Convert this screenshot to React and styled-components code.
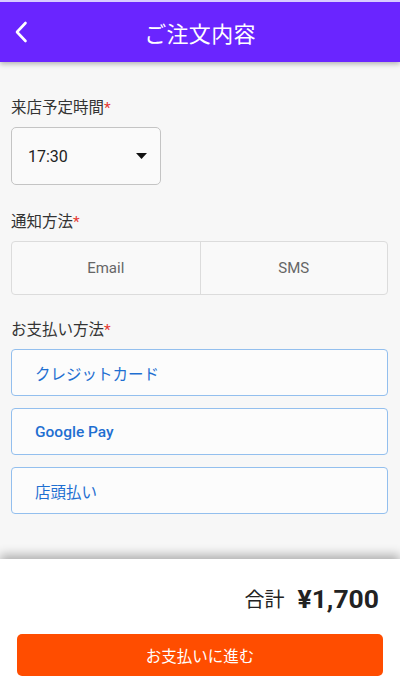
import React from "react";
import styled, { createGlobalStyle } from "styled-components";

const Global = createGlobalStyle`
  html, body { margin: 0; padding: 0; height: 100%; }
  body { background: #f7f7f7; font-family: Roboto, "Noto Sans CJK JP", sans-serif; }
  #root { height: 100%; }
`;

const Page = styled.div`
  height: 686px;
  display: flex;
  flex-direction: column;
  overflow: hidden;
  background: #f7f7f7;
  border-top: 2px solid #d9ccff;
  box-sizing: border-box;
`;

const Header = styled.header`
  position: relative;
  height: 60px;
  flex: none;
  background: #6a25ff;
  display: flex;
  align-items: center;
  justify-content: center;
  box-shadow: 0 2px 5px rgba(0, 0, 0, 0.28);
  z-index: 2;
`;

const BackButton = styled.button`
  position: absolute;
  left: 7px;
  top: 14px;
  width: 28px;
  height: 32px;
  padding: 0;
  border: none;
  background: none;
  display: flex;
  align-items: center;
  justify-content: center;
`;

const Title = styled.h1`
  margin: 0;
  color: #fff;
  font-size: 22px;
  font-weight: 400;
  letter-spacing: 0.3px;
`;

const Content = styled.main`
  flex: 1;
  padding: 35px 12px 0 11px;
  display: flex;
  flex-direction: column;
`;

const Label = styled.div`
  font-size: 15.5px;
  line-height: 22px;
  color: #333;
  margin-top: ${(p) => p.$mt || 0}px;
  margin-bottom: ${(p) => p.$mb || 8}px;
`;

const Req = styled.span`
  color: #e53935;
`;

const Select = styled.div`
  width: 150px;
  height: 58px;
  box-sizing: border-box;
  border: 1px solid #c4c4c4;
  border-radius: 5px;
  background: #fafafa;
  display: flex;
  align-items: center;
  justify-content: space-between;
  padding: 0 13px 0 16px;
  font-size: 16px;
  color: #222;
`;

const Toggle = styled.div`
  display: grid;
  grid-template-columns: 1fr 1fr;
  height: 54px;
  box-sizing: border-box;
  border: 1px solid #dcdcdc;
  border-radius: 4px;
  background: #f9f9f9;
`;

const ToggleItem = styled.div`
  display: flex;
  align-items: center;
  justify-content: center;
  font-size: 15px;
  color: #666;
  & + & {
    border-left: 1px solid #dcdcdc;
  }
`;

const PayList = styled.div`
  display: flex;
  flex-direction: column;
  gap: 12px;
`;

const PayOption = styled.div`
  height: 47px;
  box-sizing: border-box;
  border: 1px solid #93bfee;
  border-radius: 4px;
  background: #fcfcfc;
  display: flex;
  align-items: center;
  padding-left: 23px;
  font-size: ${(p) => (p.$latin ? 15.5 : 15.5)}px;
  font-weight: ${(p) => (p.$latin ? 500 : 400)};
  color: #1f6fd1;
`;

const Footer = styled.footer`
  flex: none;
  height: 127px;
  background: #fff;
  box-shadow: 0 -4px 10px rgba(0, 0, 0, 0.3);
  display: flex;
  flex-direction: column;
  padding: 24px 17px 10px;
  box-sizing: border-box;
  z-index: 2;
`;

const Total = styled.div`
  display: flex;
  justify-content: flex-end;
  align-items: center;
  gap: 13px;
  padding-right: 4px;
  height: 30px;
  color: #222;
`;

const TotalLabel = styled.span`
  font-size: 20px;
`;

const TotalValue = styled.span`
  font-size: 26.5px;
  font-weight: 700;
`;

const PayButton = styled.button`
  margin-top: auto;
  height: 42px;
  width: 100%;
  border: none;
  border-radius: 5px;
  background: #ff4d00;
  color: #fff;
  font-family: Roboto, "Noto Sans CJK JP", sans-serif;
  font-size: 15.5px;
`;

export default function App() {
  return (
    <>
      <Global />
      <Page>
        <Header>
          <BackButton aria-label="back">
            <svg width="14" height="22" viewBox="0 0 14 22">
              <path d="M11.5 2 L3 11 L11.5 20" fill="none" stroke="#fff" strokeWidth="2.6" strokeLinecap="round" strokeLinejoin="round" />
            </svg>
          </BackButton>
          <Title>ご注文内容</Title>
        </Header>
        <Content>
          <Label>来店予定時間<Req>*</Req></Label>
          <Select>
            <span>17:30</span>
            <svg width="11" height="6" viewBox="0 0 11 6">
              <path d="M0 0 H11 L5.5 6 Z" fill="#111" />
            </svg>
          </Select>
          <Label $mt={26}>通知方法<Req>*</Req></Label>
          <Toggle>
            <ToggleItem>Email</ToggleItem>
            <ToggleItem>SMS</ToggleItem>
          </Toggle>
          <Label $mt={24} $mb={8}>お支払い方法<Req>*</Req></Label>
          <PayList>
            <PayOption>クレジットカード</PayOption>
            <PayOption $latin>Google Pay</PayOption>
            <PayOption>店頭払い</PayOption>
          </PayList>
        </Content>
        <Footer>
          <Total>
            <TotalLabel>合計</TotalLabel>
            <TotalValue>¥1,700</TotalValue>
          </Total>
          <PayButton>お支払いに進む</PayButton>
        </Footer>
      </Page>
    </>
  );
}
